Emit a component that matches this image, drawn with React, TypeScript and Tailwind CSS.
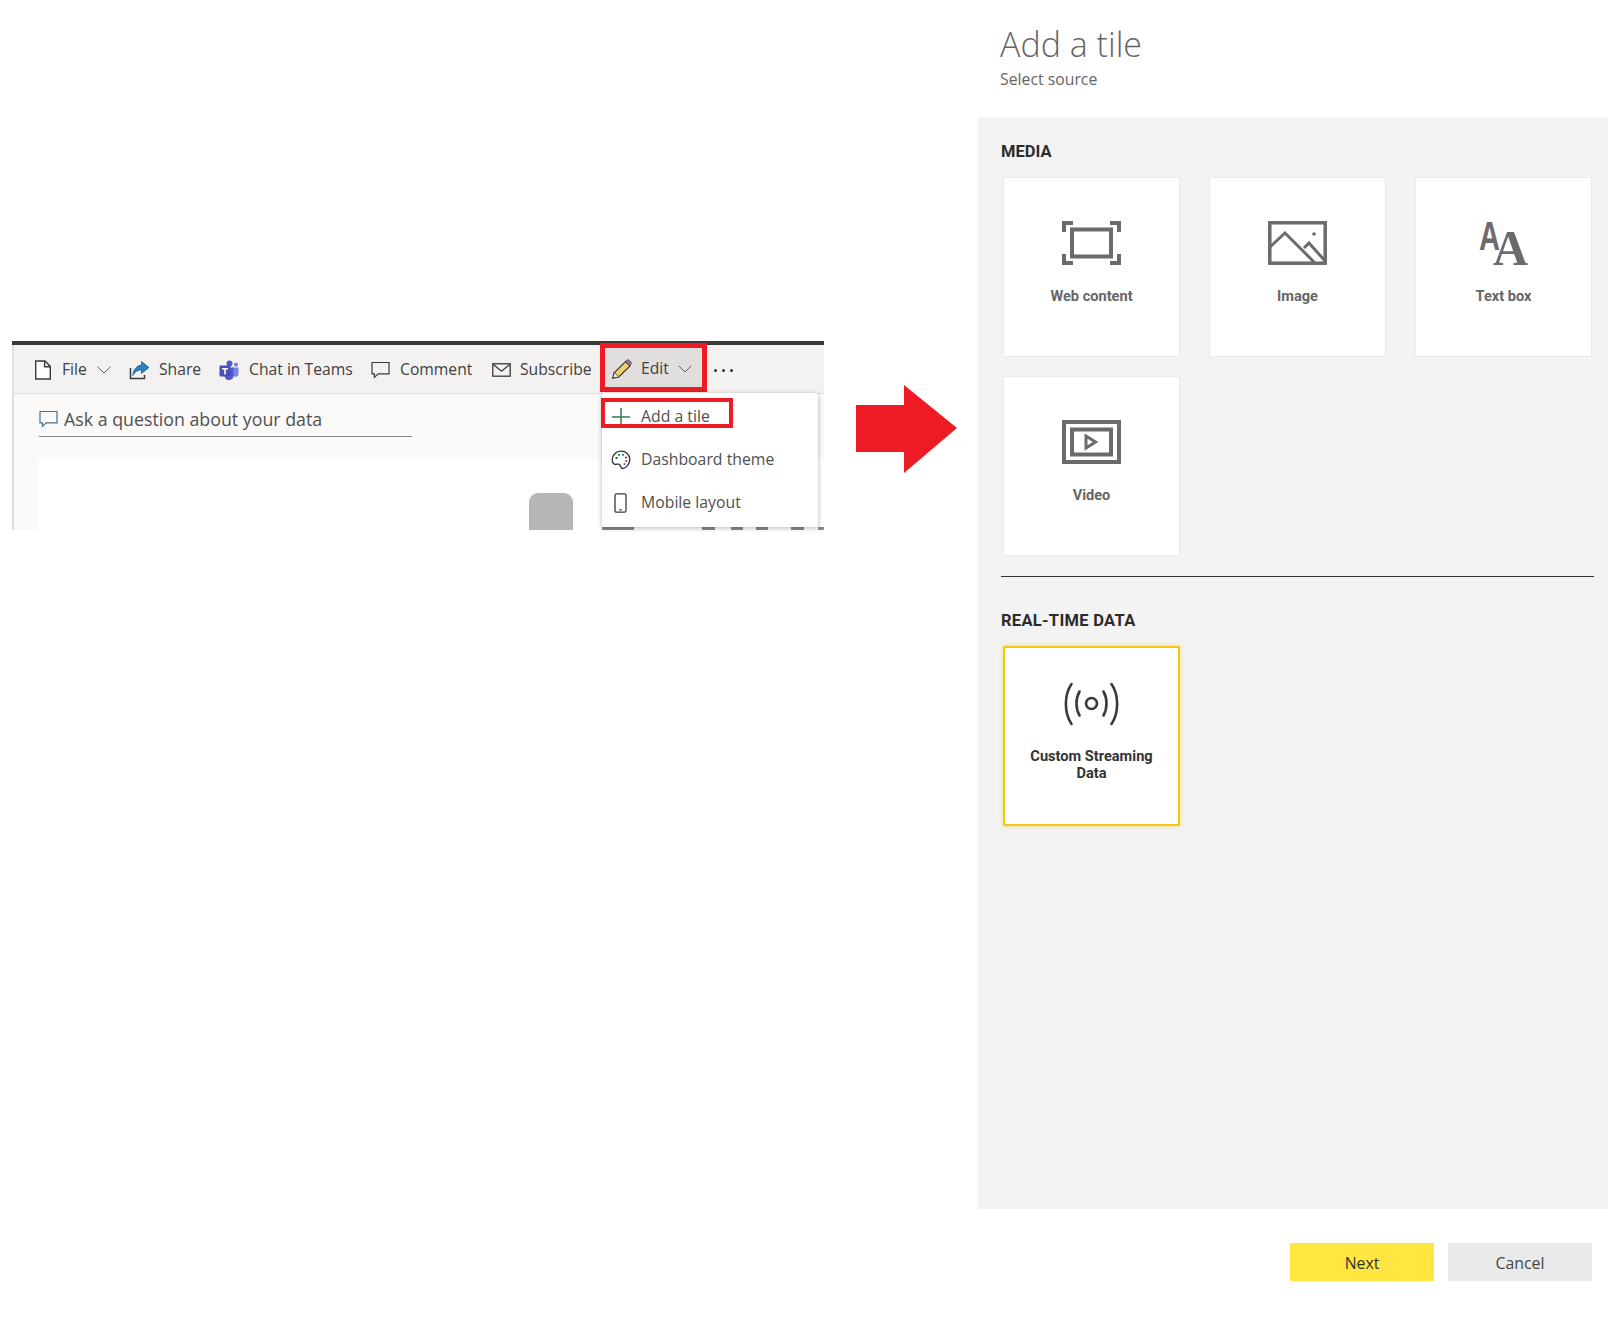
import type { ReactNode } from 'react'

const FileIcon = () => (
  <svg width="18" height="20" viewBox="0 0 18 20" fill="none" stroke="#3b3a39" strokeWidth="1.4">
    <path d="M1.700 1h9.300l5.300 5.400V19H1.700z" fill="#fff" />
    <path d="M10.600 1v5.800h5.700" />
  </svg>
)

const ShareIcon = () => (
  <svg width="21" height="20" viewBox="0 0 21 20" fill="none">
    <path d="M1.500 8v10.500h14V15" stroke="#3b3a39" strokeWidth="1.500" />
    <path d="M12.500 1.500l7.500 6-7.500 6V10C9 10 6 11.500 3.800 15.500 4.200 10 7.500 5.500 12.500 5z" fill="#2a7fc1" stroke="#1d5f96" strokeWidth="0.800" />
  </svg>
)

const TeamsIcon = () => (
  <svg width="20" height="20" viewBox="0 0 20 20">
    <circle cx="10.500" cy="3.600" r="3" fill="#5059c9" />
    <circle cx="17" cy="4.600" r="2.100" fill="#7b83eb" />
    <path d="M13 7.500h6.500v6a3.200 3.200 0 0 1-6.400 0z" fill="#7b83eb" />
    <path d="M5 7.500h9.500v8a4.500 4.500 0 0 1-9 .3z" fill="#5059c9" />
    <rect x="0.500" y="5.500" width="11" height="11" rx="1" fill="#464eb8" />
    <path d="M3 8h6v1.600H6.800v5H5.200v-5H3z" fill="#fff" />
  </svg>
)

const CommentIcon = ({ stroke = '#3b3a39' }: { stroke?: string }) => (
  <svg width="19" height="18" viewBox="0 0 19 18" fill="none" stroke={stroke} strokeWidth="1.200">
    <path d="M1 1.500h17v11.300H7.200L3.400 16.400v-3.600H1z" />
  </svg>
)

const MailIcon = () => (
  <svg width="19" height="14" viewBox="0 0 19 14" fill="none" stroke="#3b3a39" strokeWidth="1.300">
    <rect x="0.800" y="0.800" width="17.400" height="12.400" />
    <path d="M1 1.200l8.500 7 8.500-7" />
  </svg>
)

const PencilIcon = () => (
  <svg width="20" height="20" viewBox="0 0 20 20" fill="none">
    <path d="M13.500 2.500L18 7 6.800 18 2 14z" fill="#f2d16b" stroke="#3b3a39" strokeWidth="1.200" />
    <path d="M13.500 2.500l1.300-1.300a1.600 1.600 0 0 1 2.200 0l1.800 1.800a1.600 1.600 0 0 1 0 2.200L18 7z" fill="#a96fb5" stroke="#3b3a39" strokeWidth="0.800" />
    <path d="M2 14L.8 19.200 6.800 18" fill="#fff" stroke="#3b3a39" strokeWidth="1.200" />
  </svg>
)

const Chevron = ({ stroke = '#605e5c' }: { stroke?: string }) => (
  <svg width="14" height="8" viewBox="0 0 14 8" fill="none" stroke={stroke} strokeWidth="1">
    <path d="M0.700 0.800L7 7l6.300-6.200" />
  </svg>
)

const PaletteIcon = () => (
  <svg width="20" height="20" viewBox="0 0 20 20" fill="none">
    <path d="M10 1.200c5 0 8.800 3.400 8.800 8 0 4.800-3.800 9.300-7.200 9.300-2.300 0-1.600-2.500-3-4-1.400-1.300-3.300.6-5.300-.4C1.600 13.200 1.200 11.500 1.200 10 1.200 5 5 1.200 10 1.200z" stroke="#323130" strokeWidth="1.300" />
    <circle cx="5.500" cy="8" r="1.100" fill="#323130" />
    <circle cx="8" cy="4.800" r="1.100" fill="#107c10" />
    <circle cx="12" cy="4.800" r="1.100" fill="#0078d4" />
    <circle cx="15" cy="7.500" r="1.100" fill="#e3008c" />
    <circle cx="15.300" cy="11" r="1.100" fill="#d13438" />
    <circle cx="13.500" cy="14.200" r="1.100" fill="#8764b8" />
  </svg>
)

const PhoneIcon = () => (
  <svg width="13" height="20" viewBox="0 0 13 20" fill="none" stroke="#3b3a39" strokeWidth="1.300">
    <rect x="1" y="0.800" width="11" height="18.400" rx="1.500" />
    <path d="M5.500 16.800h2" strokeWidth="1.500" />
  </svg>
)

const WebIcon = () => (
  <svg width="59" height="44" viewBox="0 0 59 44" fill="none" stroke="#6b6b6b">
    <rect x="10" y="8.500" width="39" height="27" strokeWidth="4" />
    <path d="M11 2H2v9M48 2h9v9M11 42H2v-9M48 42h9v-9" strokeWidth="4" />
  </svg>
)

const ImageIcon = () => (
  <svg width="59" height="44" viewBox="0 0 59 44" fill="none" stroke="#6b6b6b" strokeWidth="3.500">
    <rect x="1.800" y="1.800" width="55.400" height="40.400" />
    <path d="M2 26l15-14 30 30" strokeWidth="3" />
    <path d="M36 27l5-5 17 19" strokeWidth="3" />
    <circle cx="46" cy="13" r="1.800" fill="#6b6b6b" stroke="none" />
  </svg>
)

const TextBoxIcon = () => (
  <svg width="59" height="48" viewBox="0 0 59 48" className="overflow-visible">
    <text x="5" y="29" fontSize="40" textLength="21" lengthAdjust="spacingAndGlyphs" fill="#6b6b6b" fontFamily="'Liberation Sans', sans-serif">A</text>
    <text x="19" y="44" fontSize="50" textLength="35" lengthAdjust="spacingAndGlyphs" fill="#6b6b6b" fontFamily="'Liberation Serif', serif">A</text>
  </svg>
)

const VideoIcon = () => (
  <svg width="59" height="44" viewBox="0 0 59 44" fill="none" stroke="#6b6b6b">
    <rect x="2" y="2" width="55" height="40" strokeWidth="4" />
    <rect x="10" y="9.500" width="39" height="25" strokeWidth="4" />
    <path d="M24 16l9.500 6-9.500 6z" strokeWidth="3" />
  </svg>
)

const StreamIcon = () => (
  <svg width="59" height="44" viewBox="0 0 59 44" fill="none" stroke="#3a3a3a" strokeWidth="2.600" strokeLinecap="round">
    <circle cx="29.500" cy="21.500" r="5.500" />
    <path d="M9.500 2C2 13 2 31 9.500 42M49.500 2c7.500 11 7.500 29 0 40" />
    <path d="M17.500 9.500c-4 7-4 17 0 24M41.500 9.500c4 7 4 17 0 24" />
  </svg>
)

function ToolItem({ icon, label, className }: { icon: ReactNode; label: string; className?: string }) {
  return (
    <div className={`flex items-center ${className ?? ''}`}>
      <span className="flex w-[28px] shrink-0 justify-start">{icon}</span>
      <span className="whitespace-nowrap">{label}</span>
    </div>
  )
}

function MenuRow({ icon, label, className }: { icon: ReactNode; label: string; className: string }) {
  return (
    <div className={`flex items-center pl-[9px] text-[15.8px] text-[#505050] ${className}`}>
      <span className="flex w-[30px] shrink-0 justify-start">{icon}</span>
      <span className="whitespace-nowrap">{label}</span>
    </div>
  )
}

function Card({ icon, label, className }: { icon: ReactNode; label: string; className: string }) {
  return (
    <div className={`flex h-[180px] w-[177px] flex-col items-center bg-white text-center font-['Roboto',sans-serif] text-[14.600px] leading-[17px] font-bold ${className}`}>
      {icon}
      <span>{label}</span>
    </div>
  )
}

export default function App() {
  return (
    <div className="flex h-[1327px] w-[1622px] overflow-hidden bg-white font-['Open_Sans',sans-serif]">
      <div className="flex w-[978px] shrink-0 items-start pt-[341px] pl-[12px]">
        {/* cropped dashboard screenshot */}
        <div className="relative h-[189px] w-[812px] shrink-0 border-t-4 border-[#3b3a39]">
          <div className="flex h-[49px] items-center border-b border-l-2 border-[#e1dfdd] bg-[#f3f2f1] pt-[2px] pl-[20px] text-[15.7px] text-[#404040]">
            <ToolItem icon={<FileIcon />} label="File" className="w-[63px]" />
            <span className="mr-[18px]"><Chevron /></span>
            <ToolItem icon={<ShareIcon />} label="Share" className="w-[90px] [&>span:first-child]:w-[30px]" />
            <ToolItem icon={<TeamsIcon />} label="Chat in Teams" className="w-[152px] [&>span:first-child]:w-[30px]" />
            <ToolItem icon={<CommentIcon />} label="Comment" className="w-[121px] [&>span:first-child]:w-[29px]" />
            <ToolItem icon={<MailIcon />} label="Subscribe" />
          </div>
          <div className="h-[65px] border-l-2 border-[#e1dfdd] bg-[#faf9f8] pt-[10px] pl-[25px]">
            <div className="flex h-[33px] w-[373px] items-center gap-[6px] border-b border-[#8a8886] pb-[2px] text-[17.8px] whitespace-nowrap text-[#505050]">
              <CommentIcon stroke="#4a6f8f" />
              Ask a question about your data
            </div>
          </div>
          <div className="h-[71px] border-l-2 border-[#e1dfdd] bg-[#faf9f8] pl-[24px]">
            <div className="h-[71px] overflow-hidden bg-white pt-[34px] pl-[491px]">
              <div className="h-[40px] w-[44px] rounded-t-[9px] bg-[#b6b6b9]" />
            </div>
          </div>

          {/* edit button, highlighted */}
          <div className="absolute top-[-2px] left-[588px] flex h-[49px] w-[107px] items-center border-[5px] border-[#ed1c24] bg-[#e1dfdd] pt-[2px] pl-[7px] text-[15.7px] text-[#404040]">
            <PencilIcon />
            <span className="ml-[9px]">Edit</span>
            <span className="ml-[9px]"><Chevron /></span>
          </div>
          <div className="absolute top-[24px] left-[702px] flex gap-[5px]">
            <span className="h-[2.500px] w-[3px] rounded-full bg-[#323130]" />
            <span className="h-[2.500px] w-[3px] rounded-full bg-[#323130]" />
            <span className="h-[2.500px] w-[3px] rounded-full bg-[#323130]" />
          </div>

          {/* bits of the page showing under the menu */}
          <div className="absolute bottom-0 left-[590px] flex h-[3px] w-[222px] bg-white">
            <span className="w-[32px] bg-[#8a8a8a]" />
            <span className="ml-[68px] w-[13px] bg-[#8a8a8a]" />
            <span className="ml-[16px] w-[12px] bg-[#8a8a8a]" />
            <span className="ml-[13px] w-[12px] bg-[#8a8a8a]" />
            <span className="ml-[23px] w-[13px] bg-[#8a8a8a]" />
            <span className="ml-[14px] w-[6px] bg-[#8a8a8a]" />
          </div>

          {/* dropdown */}
          <div className="absolute top-[48px] left-[590px] h-[134px] w-[216px] rounded-[2px] bg-white pt-[7px] shadow-[0_1px_5px_rgba(0,0,0,0.3)]">
            <MenuRow icon={<svg width="20" height="20" viewBox="0 0 20 20" stroke="#2e7d4f" strokeWidth="1.500"><path d="M10 1v18M1 10h18" /></svg>} label="Add a tile" className="h-[33px]" />
            <MenuRow icon={<PaletteIcon />} label="Dashboard theme" className="mt-[10px] h-[33px]" />
            <MenuRow icon={<span className="pl-[3px]"><PhoneIcon /></span>} label="Mobile layout" className="mt-[10px] h-[33px]" />
            <div className="absolute top-[5px] left-[-1px] h-[30px] w-[132px] border-4 border-[#ed1c24]" />
          </div>
        </div>

        <svg width="101" height="88" viewBox="1 0 101 88" className="mt-[44px] ml-[32px] shrink-0" fill="#ed1c24">
          <polygon points="0,20 49,20 49,0 102,43 49,88 49,67 0,67" />
        </svg>
      </div>

      <div className="flex w-[630px] shrink-0 flex-col">
        <div className="h-[117px] pt-[21px] pl-[22px] text-[#666666]">
          <div className="text-[34px] leading-[46px] font-light">Add a tile</div>
          <div className="mt-[1px] text-[15.8px] leading-[22px]">Select source</div>
        </div>

        <div className="h-[1092px] bg-[#f3f3f3] pt-[25px] pl-[23px] font-['Roboto',sans-serif]">
          <div className="mb-[15px] text-[16.500px] leading-[20px] font-bold text-[#2b2b2b]">MEDIA</div>
          <div className="ml-[2px] grid w-[591px] grid-cols-[177px_177px_177px] gap-x-[29px] gap-y-[19px] text-[#666666]">
            <Card icon={<span className="mb-[23px]"><WebIcon /></span>} label="Web content" className="border border-[#eaeaea] pt-[43px]" />
            <Card icon={<span className="mb-[23px]"><ImageIcon /></span>} label="Image" className="border border-[#eaeaea] pt-[43px]" />
            <Card icon={<span className="mb-[19px]"><TextBoxIcon /></span>} label="Text box" className="border border-[#eaeaea] pt-[43px]" />
            <Card icon={<span className="mb-[23px]"><VideoIcon /></span>} label="Video" className="border border-[#eaeaea] pt-[43px]" />
          </div>
          <div className="mt-[20px] mb-[34px] h-px w-[593px] bg-[#333333]" />
          <div className="mb-[15px] text-[16.500px] leading-[20px] font-bold tracking-[0.3px] text-[#2b2b2b]">REAL-TIME DATA</div>
          <div className="ml-[2px]">
            <Card
              icon={<span className="mb-[22px]"><StreamIcon /></span>}
              label="Custom Streaming Data"
              className="border-2 border-[#f2c811] px-[20px] pt-[34px] text-[#333333] shadow-[0_0_4px_rgba(242,200,17,0.6)]"
            />
          </div>
        </div>

        <div className="flex justify-end gap-[14px] pt-[34px] pr-[16px] text-[15.8px]">
          <button className="h-[38px] w-[144px] bg-[#ffe641] pt-[3px] text-[#333333]">Next</button>
          <button className="h-[38px] w-[144px] bg-[#eaeaea] pt-[3px] text-[#444444]">Cancel</button>
        </div>
      </div>
    </div>
  )
}
